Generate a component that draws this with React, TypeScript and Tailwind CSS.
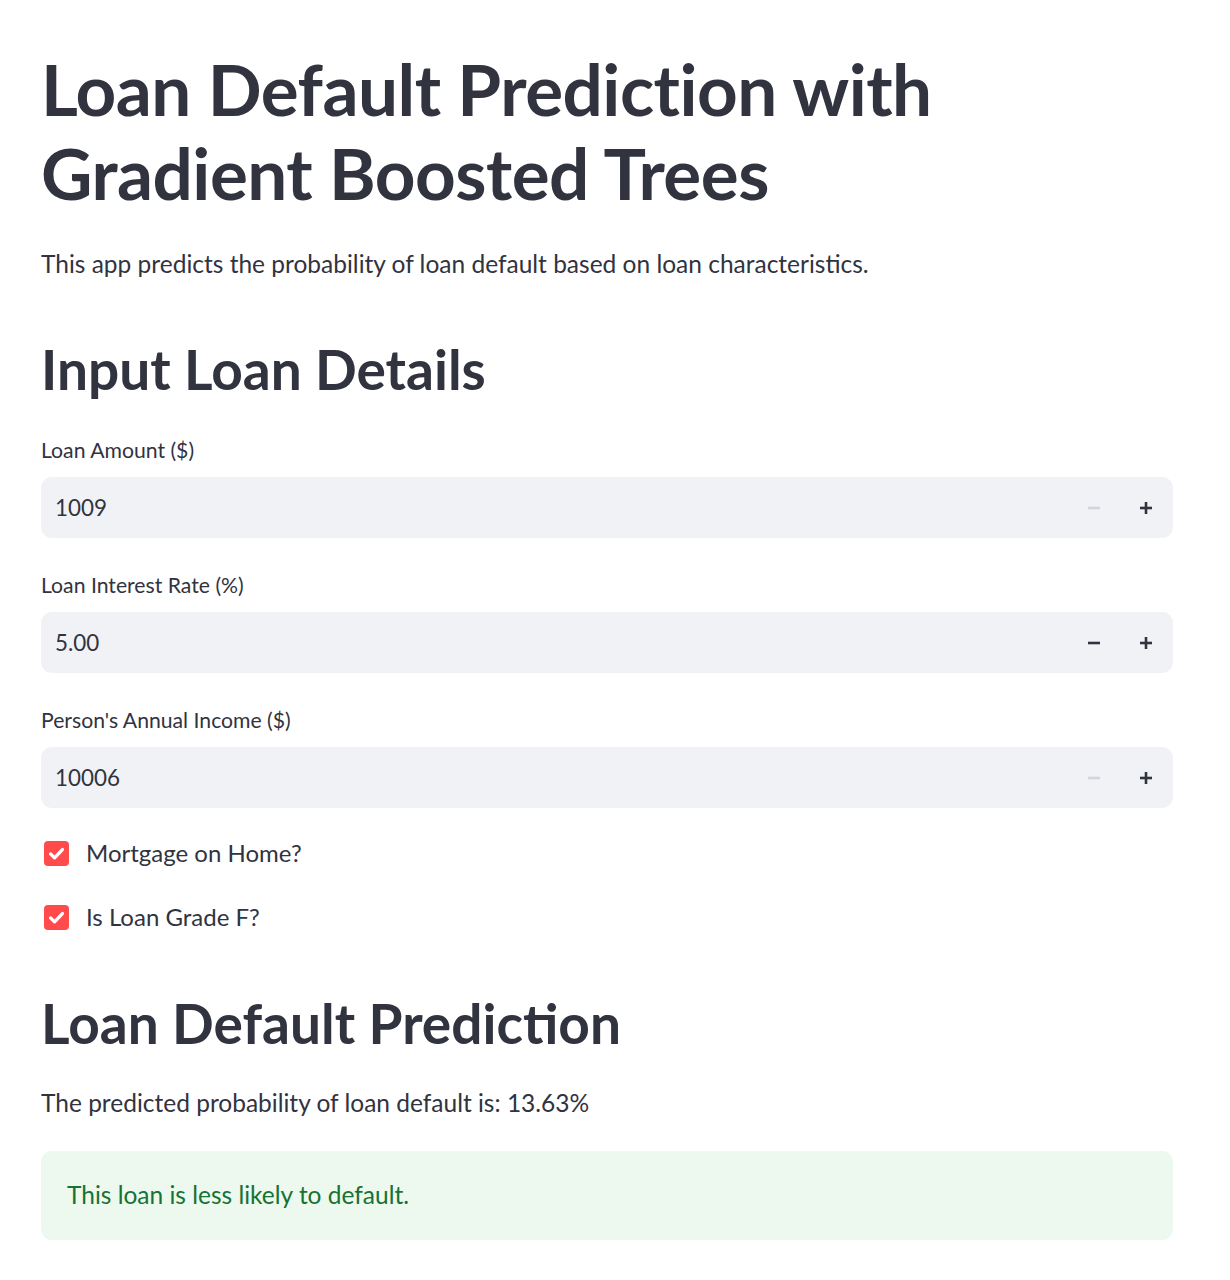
function StepIcon({ kind, disabled }: { kind: "minus" | "plus"; disabled?: boolean }) {
  return (
    <svg width="14" height="14" viewBox="0 0 14 14" className={disabled ? "text-[#d1d5dd]" : "text-[#31333f]"}>
      <path d="M1 7h12" stroke="currentColor" strokeWidth="2.6" />
      {kind === "plus" ? <path d="M7 1v12" stroke="currentColor" strokeWidth="2.6" /> : null}
    </svg>
  );
}

function NumberInput({ label, value, minusDisabled }: { label: string; value: string; minusDisabled?: boolean }) {
  return (
    <div>
      <div className="mb-[13px] h-[28px] text-[21.2px] leading-[28px]">{label}</div>
      <div className="flex h-[61px] items-center rounded-[11px] bg-[#f0f2f6] px-[14px]">
        <div className="flex-1 text-[22.4px]">{value}</div>
        <div className="mr-[26px] flex w-[26px] justify-center">
          <StepIcon kind="minus" disabled={minusDisabled} />
        </div>
        <div className="flex w-[26px] justify-center">
          <StepIcon kind="plus" />
        </div>
      </div>
    </div>
  );
}

function Check({ label }: { label: string }) {
  return (
    <div className="flex h-[64px] items-center">
      <div className="ml-[3px] flex h-[25px] w-[25px] items-center justify-center rounded-[4px] bg-[#ff4b4b]">
        <svg width="19" height="19" viewBox="0 0 24 24" fill="none" stroke="white" strokeWidth="4.2" strokeLinecap="round" strokeLinejoin="round">
          <path d="M4.5 12.5l5 5L19.5 7" />
        </svg>
      </div>
      <span className="ml-[17px] text-[24px]">{label}</span>
    </div>
  );
}

export default function App() {
  return (
    <main className="min-h-screen bg-white text-[#31333f]" style={{ fontFamily: "Lato, 'Noto Sans', sans-serif" }}>
      <div className="w-[1214px] px-[41px] pt-[47px]">
        <h1 className="text-[71px] font-bold leading-[84px] tracking-[-0.5px]">
          Loan Default Prediction with
          <br />
          Gradient Boosted Trees
        </h1>
        <p className="mt-[31px] text-[24.5px] leading-[36px]">
          This app predicts the probability of loan default based on loan characteristics.
        </p>

        <h2 className="mt-[57px] text-[55px] font-bold leading-[60px]">Input Loan Details</h2>

        <div className="mt-[37px] flex flex-col gap-[33px]">
          <NumberInput label="Loan Amount ($)" value="1009" minusDisabled />
          <NumberInput label="Loan Interest Rate (%)" value="5.00" />
          <NumberInput label="Person's Annual Income ($)" value="10006" minusDisabled />
        </div>

        <div className="mt-[13px]">
          <Check label="Mortgage on Home?" />
          <Check label="Is Loan Grade F?" />
        </div>

        <h2 className="mt-[44px] text-[55px] font-bold leading-[60px]">Loan Default Prediction</h2>

        <p className="mt-[32px] text-[24.5px] leading-[36px]">The predicted probability of loan default is: 13.63%</p>

        <div className="mt-[30px] flex h-[89px] items-center rounded-[11px] bg-[#edf8ef] px-[26px] text-[24.5px] text-[#177233]">
          This loan is less likely to default.
        </div>
      </div>
    </main>
  );
}
